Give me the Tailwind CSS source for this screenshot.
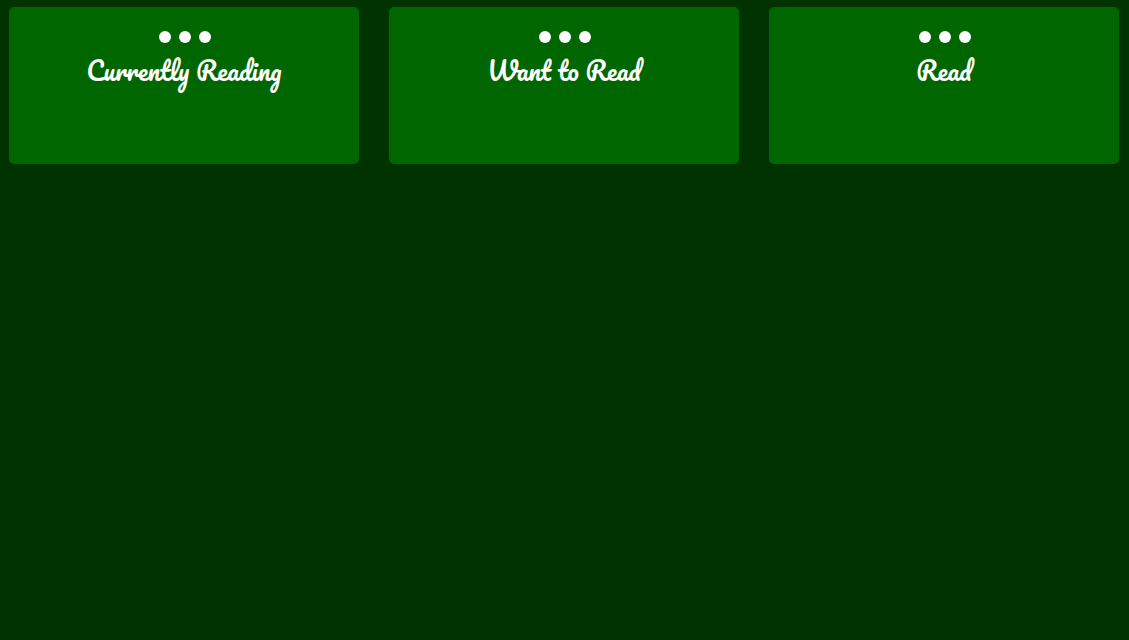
<!DOCTYPE html>
<html lang="en">
<head>
<meta charset="utf-8">
<meta name="viewport" content="width=device-width, initial-scale=1">
<title>Bookshelf</title>
<script src="https://cdn.jsdelivr.net/npm/@tailwindcss/browser@4"></script>
</head>
<body class="min-h-screen bg-[#003300] text-white">
<main class="grid grid-cols-3 gap-[30px] pt-[7px] pr-[10px] pl-[9px]">
  <section class="flex min-h-[157px] flex-col items-center rounded-[5px] bg-[#006600] pt-6">
    <div class="flex gap-2 pl-0.5" aria-hidden="true"><span class="size-3 rounded-full bg-white"></span><span class="size-3 rounded-full bg-white"></span><span class="size-3 rounded-full bg-white"></span></div>
    <h2 class="mt-3 font-['Pacifico',cursive] text-[25px] leading-[30px] font-normal">Currently Reading</h2>
  </section>
  <section class="flex min-h-[157px] flex-col items-center rounded-[5px] bg-[#006600] pt-6">
    <div class="flex gap-2 pl-0.5" aria-hidden="true"><span class="size-3 rounded-full bg-white"></span><span class="size-3 rounded-full bg-white"></span><span class="size-3 rounded-full bg-white"></span></div>
    <h2 class="mt-3 font-['Pacifico',cursive] text-[25px] leading-[30px] font-normal">Want to Read</h2>
  </section>
  <section class="flex min-h-[157px] flex-col items-center rounded-[5px] bg-[#006600] pt-6">
    <div class="flex gap-2 pl-0.5" aria-hidden="true"><span class="size-3 rounded-full bg-white"></span><span class="size-3 rounded-full bg-white"></span><span class="size-3 rounded-full bg-white"></span></div>
    <h2 class="mt-3 font-['Pacifico',cursive] text-[25px] leading-[30px] font-normal">Read</h2>
  </section>
</main>
</body>
</html>
